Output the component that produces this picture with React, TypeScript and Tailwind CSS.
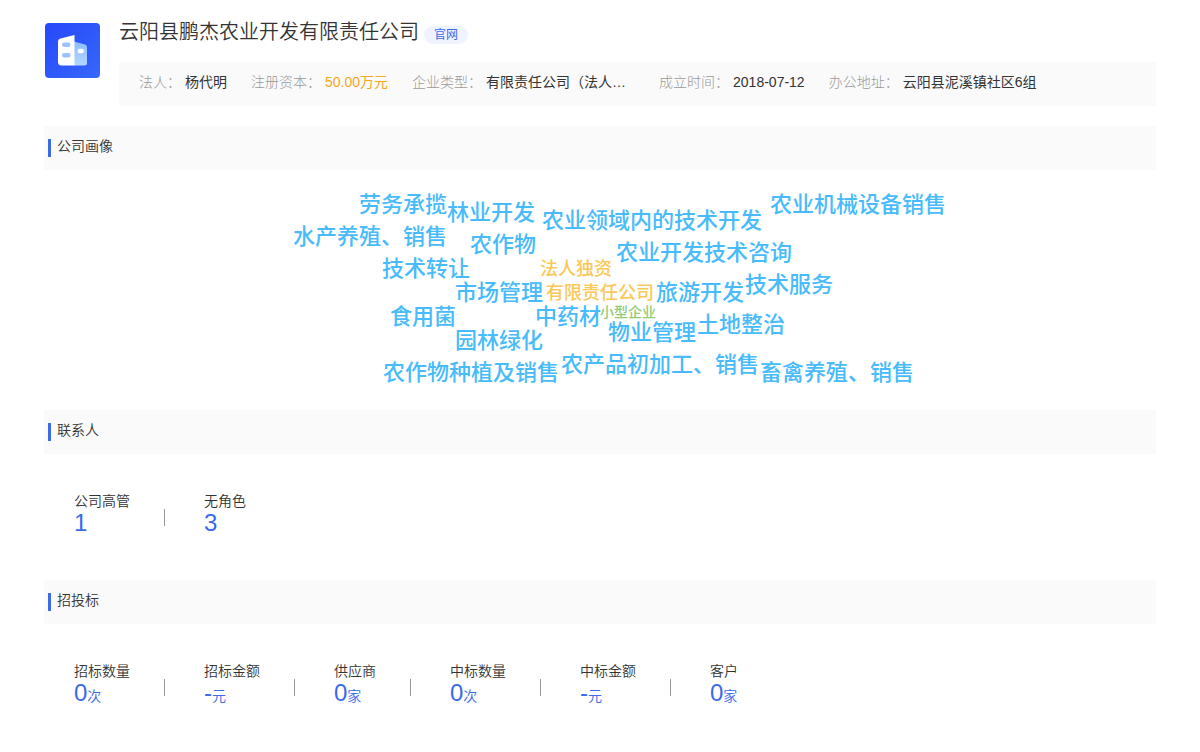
import React from "react";

type Word = { text: string; x: number; y: number; kind: "business" | "type" | "size" };

type Stat = { label: string; value: string; unit?: string };

const wordStyles = {
  business: "text-[22px] fill-[#47bbfb]",
  type: "text-[18px] fill-[#fac858]",
  size: "text-[14px] fill-[#91cc75]",
};

// x is the left edge of the word, y its baseline
const words: Word[] = [
  { text: "劳务承揽", x: 87, y: 42, kind: "business" },
  { text: "林业开发", x: 175, y: 50, kind: "business" },
  { text: "农业领域内的技术开发", x: 270, y: 58, kind: "business" },
  { text: "农业机械设备销售", x: 498, y: 42, kind: "business" },
  { text: "水产养殖、销售", x: 21, y: 74, kind: "business" },
  { text: "农作物", x: 198, y: 82, kind: "business" },
  { text: "农业开发技术咨询", x: 344, y: 90, kind: "business" },
  { text: "技术转让", x: 110, y: 106, kind: "business" },
  { text: "法人独资", x: 268, y: 105, kind: "type" },
  { text: "市场管理", x: 183, y: 130, kind: "business" },
  { text: "有限责任公司", x: 274, y: 129, kind: "type" },
  { text: "旅游开发", x: 384, y: 130, kind: "business" },
  { text: "技术服务", x: 473, y: 122, kind: "business" },
  { text: "食用菌", x: 118, y: 154, kind: "business" },
  { text: "中药材", x: 263, y: 154, kind: "business" },
  { text: "小型企业", x: 328, y: 147, kind: "size" },
  { text: "物业管理", x: 336, y: 170, kind: "business" },
  { text: "土地整治", x: 425, y: 162, kind: "business" },
  { text: "园林绿化", x: 183, y: 178, kind: "business" },
  { text: "农作物种植及销售", x: 111, y: 210, kind: "business" },
  { text: "农产品初加工、销售", x: 289, y: 202, kind: "business" },
  { text: "畜禽养殖、销售", x: 488, y: 210, kind: "business" },
];

const contacts: Stat[] = [
  { label: "公司高管", value: "1" },
  { label: "无角色", value: "3" },
];

const bids: Stat[] = [
  { label: "招标数量", value: "0", unit: "次" },
  { label: "招标金额", value: "-", unit: "元" },
  { label: "供应商", value: "0", unit: "家" },
  { label: "中标数量", value: "0", unit: "次" },
  { label: "中标金额", value: "-", unit: "元" },
  { label: "客户", value: "0", unit: "家" },
];

const CompanyLogo = () => (
  <svg className="ml-px mt-px size-[55px] shrink-0" viewBox="0 0 55 55" aria-hidden="true">
    <defs>
      <linearGradient id="logo-bg" x1="0" y1="0" x2="1" y2="1">
        <stop offset="0" stopColor="#2747fb" />
        <stop offset="1" stopColor="#3668fa" />
      </linearGradient>
      <linearGradient id="logo-side" x1="0" y1="0" x2="0" y2="1">
        <stop offset="0" stopColor="#8dbdfc" />
        <stop offset="1" stopColor="#b4d6fe" />
      </linearGradient>
    </defs>
    <rect width="55" height="55" rx="4" fill="url(#logo-bg)" />
    <path d="M29 18.5 L40 21.6 Q42 22.2 42 24.2 V40 Q42 42.5 39.5 42.5 H29 Z" fill="url(#logo-side)" />
    <path d="M29.5 12 V42.5 H16.5 Q13 42.5 13 39 V18.5 Q13 16 15.4 15.4 Z" fill="#fff" />
    <rect x="17" y="19.5" width="8.5" height="4.4" rx="2.2" fill="#9dc2fa" />
    <rect x="17" y="30" width="8.5" height="4.4" rx="2.2" fill="#9dc2fa" />
    <rect x="32.5" y="25.8" width="6.4" height="4.4" rx="2.2" fill="#fff" />
  </svg>
);

const InfoItem = ({ label, children }: { label: string; children: React.ReactNode }) => (
  <div className="flex gap-1 whitespace-nowrap">
    <dt className="font-light text-[#999]">{label}：</dt>
    {children}
  </div>
);

const SectionTitle = ({ children }: { children: React.ReactNode }) => (
  <div className="flex h-11 items-start bg-[#fafafa] pl-1">
    <span className="mt-[13px] h-[18px] w-[3px] bg-[#3a6ae8]"></span>
    <h2 className="ml-1.5 mt-2.5 text-sm font-[350] leading-5">{children}</h2>
  </div>
);

const StatList = ({ items }: { items: Stat[] }) => (
  <dl className="flex h-[126px] items-start pl-[30px] pt-[37px]">
    {items.map((item, idx) => (
      <React.Fragment key={item.label}>
        {idx > 0 && <div className="ml-[34px] mr-[39px] mt-[18px] h-[17px] w-px bg-[#999]"></div>}
        <div>
          <dt className="text-sm font-[350] leading-5">{item.label}</dt>
          <dd className="text-2xl font-[350] leading-6 text-[#3a6ae8]">
            {item.value}
            {item.unit && <span className="text-sm leading-none">{item.unit}</span>}
          </dd>
        </div>
      </React.Fragment>
    ))}
  </dl>
);

const App = () => {
  return (
    <main className="bg-white px-11 pt-[22px] font-['Liberation_Sans','Noto_Sans_CJK_SC',sans-serif] text-[#333]">
      {/* Company header */}
      <header className="flex gap-[19px]">
        <CompanyLogo />
        <div className="min-w-0 flex-1">
          <div className="flex h-10 items-start gap-[5px]">
            <h1 className="text-xl font-[350] leading-5">云阳县鹏杰农业开发有限责任公司</h1>
            <a href="#" className="mt-1 rounded-full bg-[#eff3fe] px-2.5 text-xs leading-[18px] text-[#3a6ae8]">
              官网
            </a>
          </div>
          <dl className="flex h-11 gap-6 bg-[#fafafa] pl-5 pt-2.5 text-sm leading-5">
            <InfoItem label="法人">
              <dd>杨代明</dd>
            </InfoItem>
            <InfoItem label="注册资本">
              <dd className="text-[#f5a623]">50.00万元</dd>
            </InfoItem>
            <InfoItem label="企业类型">
              <dd className="w-[149px]">有限责任公司（法人…</dd>
            </InfoItem>
            <InfoItem label="成立时间">
              <dd>2018-07-12</dd>
            </InfoItem>
            <InfoItem label="办公地址">
              <dd>云阳县泥溪镇社区6组</dd>
            </InfoItem>
          </dl>
        </div>
      </header>

      {/* Company portrait */}
      <section className="mt-5">
        <SectionTitle>公司画像</SectionTitle>
        <svg className="mx-auto h-60 w-[696px] font-medium" viewBox="-20 0 696 240">
          {words.map((word) => (
            <text key={word.text} x={word.x} y={word.y} className={wordStyles[word.kind]}>
              {word.text}
            </text>
          ))}
        </svg>
      </section>

      <section>
        <SectionTitle>联系人</SectionTitle>
        <StatList items={contacts} />
      </section>

      <section>
        <SectionTitle>招投标</SectionTitle>
        <StatList items={bids} />
      </section>
    </main>
  );
};

export default App;
